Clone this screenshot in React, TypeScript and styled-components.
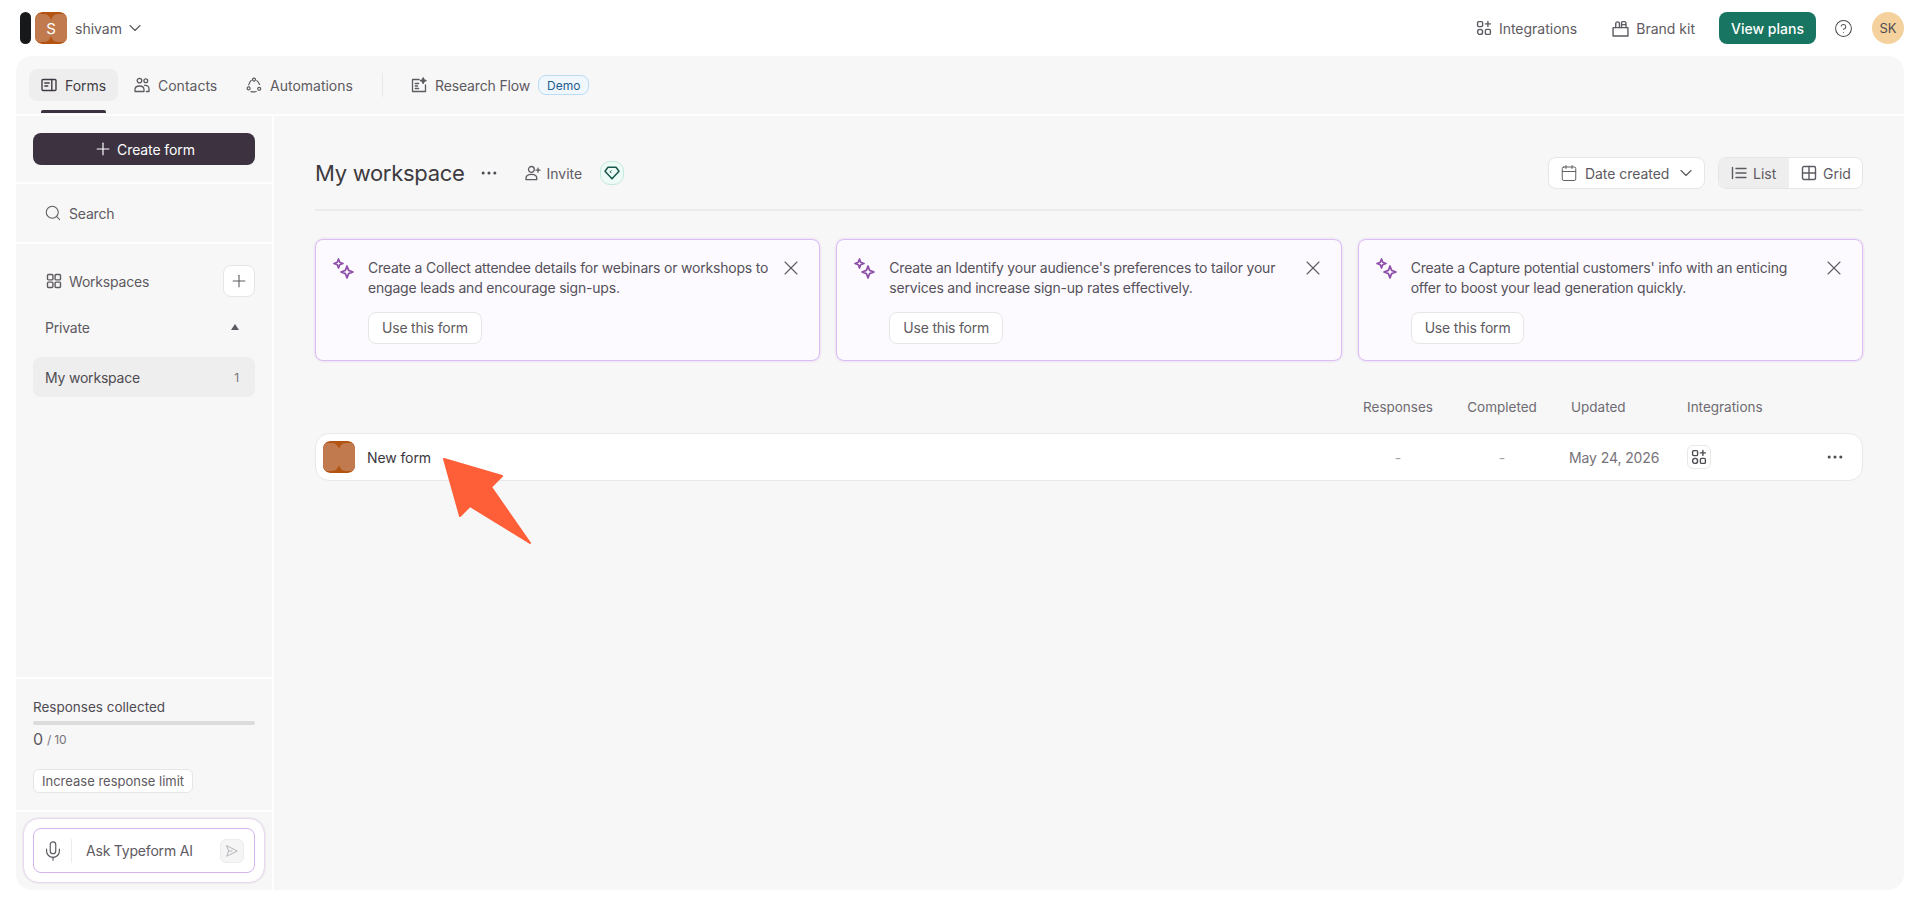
import { ReactNode } from "react";
import styled, { createGlobalStyle } from "styled-components";
import { Calendar, ChevronDown, CircleHelp, Ellipsis, Mic, Plus, Search, X } from "lucide-react";

const GlobalStyle = createGlobalStyle`
  html, body {
    margin: 0;
    background: #fff;
  }
  body {
    font-family: Inter, "Liberation Sans", sans-serif;
    font-size: 14px;
    color: #4f4b52;
    -webkit-font-smoothing: antialiased;
  }
  * {
    box-sizing: border-box;
  }
  svg {
    flex-shrink: 0;
  }
`;

const Glyph = ({ size = 16, sw = 1.3, children }: { size?: number; sw?: number; children: ReactNode }) => (
  <svg width={size} height={size} viewBox="0 0 16 16" fill="none" stroke="currentColor" strokeWidth={sw} strokeLinecap="round" strokeLinejoin="round">
    {children}
  </svg>
);

const FormsIcon = () => (
  <Glyph sw={1.4}>
    <rect x="1" y="2.5" width="14" height="11" rx="1" />
    <path d="M10.8 2.5v11M3.8 6h4.4M3.8 9h3" />
  </Glyph>
);
const ContactsIcon = () => (
  <Glyph>
    <circle cx="5.5" cy="3.6" r="2.3" />
    <circle cx="11.8" cy="3.8" r="1.9" />
    <path d="M1 14.500v-1.700C1 10.600 2.800 9 5.500 9S10 10.600 10 12.800v1.700H1zM10.600 8.400c2.600-.4 4.400 1 4.400 3.400v2.700h-2.600" />
  </Glyph>
);
const AutomationsIcon = () => (
  <Glyph sw={1.2}>
    <circle cx="8" cy="2.6" r="1.5" />
    <circle cx="2.6" cy="11.400" r="1.5" />
    <circle cx="13.200" cy="11.800" r="1.5" />
    <path d="M5.200 3.400C3.800 4.700 3 6.300 2.700 8M10.800 3.600c1.200 1 2.100 2.300 2.800 3.900M5 14.600c1.700.5 3.400.5 5.200-.1" />
  </Glyph>
);
const ResearchIcon = () => (
  <Glyph>
    <path d="M8.200 2.500H1.500v12h13V8" />
    <path d="M4.200 6.500h3.400M4.200 9h2.400M4.200 11.500h3.400" />
    <path d="M12.200.8l.8 2 2 .8-2 .8-.8 2-.8-2-2-.8 2-.8z" fill="currentColor" />
  </Glyph>
);
const WorkspacesIcon = () => (
  <Glyph sw={1.4}>
    <rect x="1.500" y="1.500" width="5.400" height="5.400" rx="1" />
    <rect x="9.100" y="1.500" width="5.400" height="5.400" rx="1" />
    <rect x="1.500" y="9.100" width="5.400" height="5.400" rx="1" />
    <rect x="9.100" y="9.100" width="5.400" height="5.400" rx="1" />
  </Glyph>
);
const IntegrationsIcon = ({ size = 16 }: { size?: number }) => (
  <Glyph size={size} sw={1.4}>
    <rect x="1.600" y="1.600" width="5" height="5" rx="1" />
    <circle cx="4.100" cy="11.900" r="2.500" />
    <rect x="9.400" y="9.400" width="5" height="5" rx="1.200" />
    <path d="M11.900 1.400v5M9.400 3.900h5" />
  </Glyph>
);
const BrandKitIcon = () => (
  <Glyph size={17}>
    <path d="M1 7.200h14V15H1z" />
    <path d="M3.500 7V3.600C3.500 2.400 4.200 1.800 5.200 1.800S7 2.400 7 3.600V7M9 7V2.400c0-.5.4-.9.9-.9h1.600c1 0 1.700.7 1.700 1.800V7M9 4.400h4" />
  </Glyph>
);
const InviteIcon = () => (
  <Glyph sw={1.3}>
    <circle cx="6.400" cy="4.400" r="2.900" />
    <path d="M1 14.600v-1.200c0-2.300 2.200-4 5.400-4s5.400 1.700 5.400 4v1.200H1zM13 3.200v4M11 5.200h4" />
  </Glyph>
);
const DiamondIcon = () => (
  <svg width="16" height="14" viewBox="0 0 16 14" fill="none" stroke="#17594b" strokeWidth="1.5" strokeLinejoin="round">
    <path d="M4 1.200h8l3 4L8 12.800 1 5.200z" />
    <path d="M7.400 4.500L6.100 5.800l1.300 1.300" strokeWidth="1" />
  </svg>
);
const SparkIcon = () => (
  <svg width="22" height="22" viewBox="0 0 22 22" fill="none" stroke="#8e4fa8" strokeWidth="1.700" strokeLinejoin="round">
    <path d="M5.500 1l1.200 3.300L10 5.500 6.700 6.700 5.500 10 4.300 6.700 1 5.500l3.300-1.200z" />
    <path d="M14 8l1.600 4.400L20 14l-4.400 1.600L14 20l-1.600-4.400L8 14l4.400-1.600z" />
  </svg>
);
const ListIcon = () => (
  <Glyph sw={1.4}>
    <path d="M1.500 2.500v11M5 3.500h10M5 8h10M5 12.500h10" />
  </Glyph>
);
const GridIcon = () => (
  <Glyph sw={1.4}>
    <rect x="1.500" y="1.500" width="13" height="13" rx="1.500" />
    <path d="M8 1.500v13M1.500 8h13" />
  </Glyph>
);
const SendIcon = () => (
  <Glyph size={14} sw={1.100}>
    <path d="M2 2l12 6-12 6 2-6zM4 8h4" />
  </Glyph>
);

const ThumbArt = ({ size }: { size: number }) => (
  <svg width={size} height={size} viewBox="0 0 32 32" style={{ display: "block" }}>
    <rect width="32" height="32" rx="7" fill="#b35412" />
    <path d="M0 6c0-2 2-4 4-4h5c4 0 6 3 7 6 1-3 3-6 7-6h5c2 0 4 2 4 4v20c0 2-2 4-4 4h-5c-4 0-6-3-7-6-1 3-3 6-7 6H4c-2 0-4-2-4-4z" fill="#c17a4e" />
  </svg>
);

const TopBar = styled.header`
  height: 56px;
  padding: 0 16px 0 20px;
  display: flex;
  align-items: center;
  justify-content: space-between;
`;
const Brand = styled.div`
  display: flex;
  align-items: center;
  color: #5e5a61;
`;
const BlackPill = styled.div`
  width: 11px;
  height: 32px;
  border-radius: 6px;
  background: #17181a;
  margin-right: 4px;
`;
const OrgLogo = styled.div`
  position: relative;
  width: 32px;
  height: 32px;
  margin-right: 8px;
  border-radius: 7px;
  overflow: hidden;
`;
const OrgLetter = styled.span`
  position: absolute;
  inset: 0;
  display: flex;
  align-items: center;
  justify-content: center;
  color: #fff;
  font-size: 15px;
`;
const OrgName = styled.span`
  margin-right: 3px;
`;
const TopActions = styled.div`
  display: flex;
  align-items: center;
`;
const TopLink = styled.div<{ $gap: number }>`
  display: flex;
  align-items: center;
  gap: 7px;
  color: #5e5a61;
  margin-right: ${(p) => p.$gap}px;
`;
const PlansButton = styled.div`
  width: 97px;
  height: 32px;
  margin-right: 18px;
  border-radius: 8px;
  background: #177561;
  color: #fff;
  font-weight: 500;
  display: flex;
  align-items: center;
  justify-content: center;
`;
const HelpWrap = styled.div`
  display: flex;
  color: #4f4b52;
  margin-right: 19px;
`;
const Avatar = styled.div`
  width: 32px;
  height: 32px;
  border-radius: 50%;
  background: #f5d29d;
  color: #4f4b52;
  font-size: 13px;
  display: flex;
  align-items: center;
  justify-content: center;
`;

const Panel = styled.div`
  margin: 0 16px;
  height: 834px;
  border-radius: 16px;
  background: #f7f7f7;
  overflow: hidden;
  display: flex;
  flex-direction: column;
`;
const Tabs = styled.nav`
  height: 60px;
  flex-shrink: 0;
  padding: 13px 0 0 13px;
  border-bottom: 2px solid #fff;
  display: flex;
  align-items: flex-start;
  gap: 4px;
`;
const Tab = styled.div<{ $active?: boolean; $width: number; $tight?: boolean }>`
  position: relative;
  width: ${(p) => p.$width}px;
  height: 32px;
  border-radius: 8px;
  padding-left: 12px;
  display: flex;
  align-items: center;
  gap: 8px;
  letter-spacing: ${(p) => (p.$tight ? "-0.15px" : "0")};
  color: ${(p) => (p.$active ? "#403b44" : "#5e5a61")};
  background: ${(p) => (p.$active ? "#eeeeee" : "transparent")};
  ${(p) =>
    p.$active &&
    `&::after {
      content: "";
      position: absolute;
      left: 12px;
      right: 12px;
      bottom: -12px;
      height: 3px;
      border-radius: 2px 2px 0 0;
      background: #3d3240;
    }`}
`;
const TabSep = styled.div`
  width: 1px;
  height: 24px;
  margin: 4px 12px 0 12px;
  background: #e8e8e8;
`;
const DemoBadge = styled.span`
  height: 20px;
  padding: 0 8px;
  border-radius: 8px;
  border: 1px solid #b9dcf3;
  background: #f0f8fe;
  color: #1e5d8e;
  font-size: 12px;
  letter-spacing: 0;
  display: flex;
  align-items: center;
`;

const Body = styled.div`
  flex: 1;
  min-height: 0;
  display: flex;
`;
const Sidebar = styled.aside`
  width: 258px;
  flex-shrink: 0;
  border-right: 2px solid #fff;
  display: flex;
  flex-direction: column;
  letter-spacing: -0.2px;
`;
const SideSection = styled.div<{ $h?: number; $grow?: boolean }>`
  height: ${(p) => (p.$h ? `${p.$h}px` : "auto")};
  flex: ${(p) => (p.$grow ? 1 : "none")};
  border-bottom: 2px solid #fff;
  &:last-child {
    border-bottom: none;
  }
`;
const CreateSection = styled(SideSection)`
  padding: 17px;
`;
const CreateButton = styled.div`
  height: 32px;
  border-radius: 8px;
  background: #3d3240;
  color: #fff;
  letter-spacing: -0.1px;
  display: flex;
  align-items: center;
  justify-content: center;
  gap: 4px;
`;
const SearchSection = styled(SideSection)`
  padding: 0 28px;
  display: flex;
  align-items: center;
  gap: 7px;
  color: #5e5a61;
`;
const WorkspacesSection = styled(SideSection)`
  padding: 21px 17px 0;
`;
const WorkspacesHead = styled.div`
  height: 32px;
  padding-left: 13px;
  display: flex;
  align-items: center;
  gap: 7px;
  color: #5e5a61;
`;
const AddButton = styled.div`
  width: 32px;
  height: 32px;
  margin-left: auto;
  border-radius: 8px;
  border: 1px solid #e6e6e6;
  background: #fff;
  display: flex;
  align-items: center;
  justify-content: center;
`;
const PrivateRow = styled.div`
  margin-top: 14px;
  height: 32px;
  padding: 0 16px 0 12px;
  display: flex;
  align-items: center;
  justify-content: space-between;
  color: #5e5a61;
`;
const Caret = styled.span`
  width: 0;
  height: 0;
  border-left: 4px solid transparent;
  border-right: 4px solid transparent;
  border-bottom: 6px solid #5e5a61;
`;
const WorkspaceItem = styled.div`
  margin-top: 14px;
  height: 40px;
  padding: 0 16px 0 12px;
  border-radius: 8px;
  background: #eeeeee;
  color: #4f4b52;
  display: flex;
  align-items: center;
  justify-content: space-between;
`;
const Count = styled.span`
  font-size: 12px;
  color: #77737a;
`;
const QuotaSection = styled(SideSection)`
  height: 133px;
  padding: 18px 17px 0;
`;
const QuotaTitle = styled.div`
  line-height: 20px;
  letter-spacing: 0;
  font-size: 13.5px;
`;
const QuotaBar = styled.div`
  height: 4px;
  margin-top: 4px;
  border-radius: 2px;
  background: #dcdcdc;
`;
const QuotaNumbers = styled.div`
  margin-top: 2px;
  height: 24px;
  display: flex;
  align-items: center;
  gap: 4px;
  color: #77737a;
  font-size: 12px;
`;
const QuotaValue = styled.span`
  font-size: 16px;
  color: #5e5a61;
`;
const LimitButton = styled.div`
  display: flex;
  width: fit-content;
  align-items: center;
  height: 24px;
  margin-top: 18px;
  padding: 0 8px;
  border-radius: 6px;
  border: 1px solid #e6e6e6;
  background: #fff;
  font-size: 13px;
  letter-spacing: 0;
  color: #5e5a61;
`;
const AskSection = styled(SideSection)`
  padding: 6px 7px 7px;
`;
const AskOuter = styled.div`
  height: 65px;
  padding: 9px;
  border-radius: 16px;
  background: #fff;
  border: 1px solid #e8d7f1;
  box-shadow: 0 0 0 1px #ececec;
`;
const AskInner = styled.div`
  height: 45px;
  border-radius: 8px;
  border: 1.5px solid #d4b4ea;
  background: #fff;
  display: flex;
  align-items: center;
  padding: 0 10px 0 8px;
  color: #5e5a61;
`;
const AskSep = styled.div`
  width: 1px;
  height: 24px;
  margin: 0 14px 0 7px;
  background: #ececec;
`;
const SendButton = styled.div`
  width: 24px;
  height: 24px;
  margin-left: auto;
  border-radius: 6px;
  border: 1px solid #ececec;
  background: #f5f5f5;
  color: #b3b0b6;
  display: flex;
  align-items: center;
  justify-content: center;
`;

const Main = styled.main`
  position: relative;
  flex: 1;
  min-width: 0;
  padding: 41px 41px 0;
`;
const Header = styled.div`
  height: 54px;
  padding-bottom: 20px;
  border-bottom: 2px solid #ececec;
  display: flex;
  align-items: center;
`;
const Title = styled.h1`
  margin: 0 15px 0 0;
  font-size: 22px;
  font-weight: 400;
  letter-spacing: -0.3px;
  color: #3d3a40;
  white-space: nowrap;
`;
const DotsWrap = styled.div`
  display: flex;
  color: #4f4b52;
  margin-right: 26px;
`;
const InviteLink = styled.div`
  display: flex;
  align-items: center;
  gap: 5px;
  color: #5e5a61;
  margin-right: 18px;
`;
const PlanBadge = styled.div`
  width: 24px;
  height: 24px;
  border-radius: 10px;
  border: 1px solid #c3e8dd;
  background: #eefaf6;
  display: flex;
  align-items: center;
  justify-content: center;
`;
const HeaderRight = styled.div`
  margin-left: auto;
  display: flex;
  gap: 13px;
`;
const SortSelect = styled.div`
  width: 157px;
  height: 32px;
  padding: 0 8px 0 11px;
  border-radius: 8px;
  border: 1px solid #e6e6e6;
  background: #fff;
  color: #5e5a61;
  white-space: nowrap;
  letter-spacing: -0.05px;
  display: flex;
  align-items: center;
  gap: 7px;
`;
const ChevronEnd = styled.span`
  display: flex;
  margin-left: auto;
`;
const ViewToggle = styled.div`
  display: flex;
  height: 32px;
  border-radius: 8px;
  border: 1px solid #e6e6e6;
  background: #fff;
  overflow: hidden;
`;
const ViewOption = styled.div<{ $active?: boolean; $width: number }>`
  width: ${(p) => p.$width}px;
  padding-left: 12px;
  display: flex;
  align-items: center;
  gap: 6px;
  color: #5e5a61;
  background: ${(p) => (p.$active ? "#eeeeee" : "transparent")};
`;

const Cards = styled.div`
  margin-top: 28px;
  display: grid;
  grid-template-columns: repeat(3, 1fr);
  gap: 16px;
`;
const Card = styled.div`
  height: 122px;
  padding: 18px 17px;
  border-radius: 8px;
  border: 1.5px solid #dcbcf2;
  box-shadow: 0 0 0 1.5px #efeaf4;
  background: #fcfaff;
  display: flex;
  align-items: flex-start;
`;
const CardText = styled.div`
  width: 403px;
  flex-shrink: 0;
  margin-left: 13px;
  line-height: 20px;
  letter-spacing: -0.2px;
  color: #55515a;
`;
const UseButton = styled.div`
  display: inline-flex;
  align-items: center;
  height: 32px;
  margin-top: 14px;
  padding: 0 13px;
  border-radius: 8px;
  border: 1px solid #e6e6e6;
  background: #fff;
  color: #5e5a61;
`;
const CloseWrap = styled.div`
  display: flex;
  margin: -2px -1px 0 auto;
  color: #5e5a61;
`;

const TableGrid = styled.div`
  display: grid;
  grid-template-columns: 1fr 104px 104px 133px 175px;
  align-items: center;
`;
const TableHead = styled(TableGrid)`
  margin-top: 27px;
  height: 37px;
  padding: 0 1px;
  color: #6f6b72;
  font-size: 13.5px;
`;
const HeadCell = styled.div<{ $center?: boolean; $inset?: number }>`
  text-align: ${(p) => (p.$center ? "center" : "left")};
  padding-left: ${(p) => p.$inset ?? 0}px;
`;
const Row = styled(TableGrid)`
  margin-top: 8px;
  height: 48px;
  padding: 0 0 0 1px;
  border-radius: 14px;
  border: 1px solid #e8e8e8;
  background: #fff;
`;
const NameCell = styled.div`
  display: flex;
  align-items: center;
  gap: 12px;
  padding-left: 6px;
  color: #3a373d;
  letter-spacing: -0.1px;
`;
const Thumb = styled.div`
  border-radius: 7px;
  overflow: hidden;
`;
const Dash = styled.div`
  text-align: center;
  color: #a5a2a8;
`;
const DateCell = styled.div`
  padding-left: 15px;
  letter-spacing: -0.1px;
  color: #77737a;
`;
const IntegrationCell = styled.div`
  display: flex;
  align-items: center;
  justify-content: space-between;
  padding-right: 17px;
  color: #4f4b52;
`;
const IntegrationChip = styled.div`
  width: 24px;
  height: 24px;
  border-radius: 6px;
  border: 1px solid #e8e8e8;
  display: flex;
  align-items: center;
  justify-content: center;
`;
const Arrow = styled.svg`
  position: absolute;
  left: 150px;
  top: 340px;
  pointer-events: none;
`;

const suggestions = [
  "Create a Collect attendee details for webinars or workshops to engage leads and encourage sign-ups.",
  "Create an Identify your audience's preferences to tailor your services and increase sign-up rates effectively.",
  "Create a Capture potential customers' info with an enticing offer to boost your lead generation quickly.",
];

export default function App() {
  return (
    <>
      <GlobalStyle />
      <TopBar>
        <Brand>
          <BlackPill />
          <OrgLogo>
            <ThumbArt size={32} />
            <OrgLetter>S</OrgLetter>
          </OrgLogo>
          <OrgName>shivam</OrgName>
          <ChevronDown size={20} strokeWidth={1.4} />
        </Brand>
        <TopActions>
          <TopLink $gap={35}>
            <IntegrationsIcon />
            Integrations
          </TopLink>
          <TopLink $gap={24}>
            <BrandKitIcon />
            Brand kit
          </TopLink>
          <PlansButton>View plans</PlansButton>
          <HelpWrap>
            <CircleHelp size={19} strokeWidth={1.3} />
          </HelpWrap>
          <Avatar>SK</Avatar>
        </TopActions>
      </TopBar>
      <Panel>
        <Tabs>
          <Tab $active $width={89}>
            <FormsIcon />
            Forms
          </Tab>
          <Tab $width={108}>
            <ContactsIcon />
            Contacts
          </Tab>
          <Tab $width={132}>
            <AutomationsIcon />
            Automations
          </Tab>
          <TabSep />
          <Tab $width={208} $tight>
            <ResearchIcon />
            Research Flow
            <DemoBadge>Demo</DemoBadge>
          </Tab>
        </Tabs>
        <Body>
          <Sidebar>
            <CreateSection $h={68}>
              <CreateButton>
                <Plus size={20} strokeWidth={1.4} />
                Create form
              </CreateButton>
            </CreateSection>
            <SearchSection $h={60}>
              <Search size={18} strokeWidth={1.4} />
              Search
            </SearchSection>
            <WorkspacesSection $grow>
              <WorkspacesHead>
                <WorkspacesIcon />
                Workspaces
                <AddButton>
                  <Plus size={20} strokeWidth={1.3} />
                </AddButton>
              </WorkspacesHead>
              <PrivateRow>
                Private
                <Caret />
              </PrivateRow>
              <WorkspaceItem>
                My workspace
                <Count>1</Count>
              </WorkspaceItem>
            </WorkspacesSection>
            <QuotaSection>
              <QuotaTitle>Responses collected</QuotaTitle>
              <QuotaBar />
              <QuotaNumbers>
                <QuotaValue>0</QuotaValue>/ 10
              </QuotaNumbers>
              <LimitButton>Increase response limit</LimitButton>
            </QuotaSection>
            <AskSection>
              <AskOuter>
                <AskInner>
                  <Mic size={22} strokeWidth={1.3} />
                  <AskSep />
                  Ask Typeform AI
                  <SendButton>
                    <SendIcon />
                  </SendButton>
                </AskInner>
              </AskOuter>
            </AskSection>
          </Sidebar>
          <Main>
            <Header>
              <Title>My workspace</Title>
              <DotsWrap>
                <Ellipsis size={20} strokeWidth={1.7} />
              </DotsWrap>
              <InviteLink>
                <InviteIcon />
                Invite
              </InviteLink>
              <PlanBadge>
                <DiamondIcon />
              </PlanBadge>
              <HeaderRight>
                <SortSelect>
                  <Calendar size={18} strokeWidth={1.3} />
                  Date created
                  <ChevronEnd>
                    <ChevronDown size={20} strokeWidth={1.4} />
                  </ChevronEnd>
                </SortSelect>
                <ViewToggle>
                  <ViewOption $active $width={70}>
                    <ListIcon />
                    List
                  </ViewOption>
                  <ViewOption $width={73}>
                    <GridIcon />
                    Grid
                  </ViewOption>
                </ViewToggle>
              </HeaderRight>
            </Header>
            <Cards>
              {suggestions.map((text) => (
                <Card key={text}>
                  <SparkIcon />
                  <CardText>
                    {text}
                    <br />
                    <UseButton>Use this form</UseButton>
                  </CardText>
                  <CloseWrap>
                    <X size={24} strokeWidth={1.100} />
                  </CloseWrap>
                </Card>
              ))}
            </Cards>
            <TableHead>
              <div />
              <HeadCell $center>Responses</HeadCell>
              <HeadCell $center>Completed</HeadCell>
              <HeadCell $inset={17}>Updated</HeadCell>
              <HeadCell>Integrations</HeadCell>
            </TableHead>
            <Row>
              <NameCell>
                <Thumb>
                  <ThumbArt size={32} />
                </Thumb>
                New form
              </NameCell>
              <Dash>-</Dash>
              <Dash>-</Dash>
              <DateCell>May 24, 2026</DateCell>
              <IntegrationCell>
                <IntegrationChip>
                  <IntegrationsIcon size={16} />
                </IntegrationChip>
                <Ellipsis size={20} strokeWidth={1.7} />
              </IntegrationCell>
            </Row>
            <Arrow width="115" height="100" viewBox="0 0 115 100" fill="#ff5f38" stroke="#ff5f38" strokeWidth="2" strokeLinejoin="round">
              <path d="M20 3l58 17-11 11 39 56-60-37-10 10z" />
            </Arrow>
          </Main>
        </Body>
      </Panel>
    </>
  );
}
